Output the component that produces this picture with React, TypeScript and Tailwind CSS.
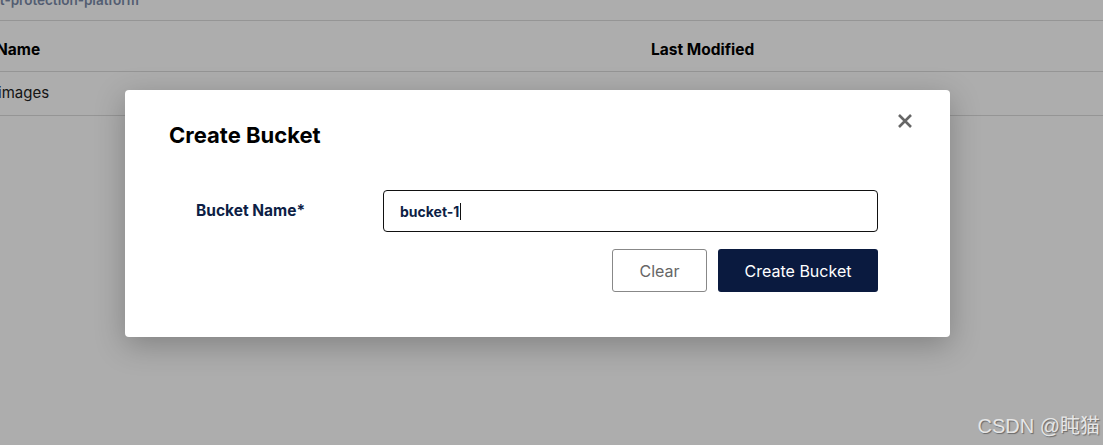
import React from "react";

export default function App() {
  return (
    <div className="relative w-[1103px] h-[445px] overflow-hidden bg-white font-['Inter',sans-serif]">
      {/* underlying page */}
      <div className="flex flex-col mt-[-9px]">
        <div className="h-[30px] flex items-center pb-[10px] border-b border-[#dcdcdc] ml-[-8px]">
          <span className="text-[13.5px] font-semibold text-[#7a8aa8]">ct-protection-platform</span>
        </div>
        <div className="h-[51px] flex items-center pt-[7px] border-b border-[#dcdcdc] text-[15.5px] font-bold text-black">
          <div className="w-[651px] ml-[-4px]">Name</div>
          <div className="ml-[4px]">Last Modified</div>
        </div>
        <div className="h-[44px] flex items-center border-b border-[#dcdcdc] text-[15px] text-[#222]">
          <div className="ml-[-2px]">images</div>
        </div>
      </div>

      {/* backdrop */}
      <div className="absolute inset-0 bg-black/[0.32]" />

      {/* modal */}
      <div className="absolute left-[125px] top-[90px] w-[825px] h-[247px] bg-white rounded-[4px] shadow-[0_8px_30px_rgba(0,0,0,0.25)] pl-[44px] pr-[72px] pt-[31px]">
        <button className="absolute right-[36px] top-[22px] w-[18px] h-[18px] flex items-center justify-center text-[#666]">
          <svg width="18" height="18" viewBox="0 0 18 18" fill="none">
            <path d="M3 3L15 15M15 3L3 15" stroke="#666" strokeWidth="2.6" strokeLinecap="butt" />
          </svg>
        </button>
        <h2 className="text-[22px] leading-[28px] font-bold text-black">Create Bucket</h2>
        <div className="flex items-center mt-[41px] h-[42px]">
          <label className="w-[214px] pl-[27px] text-[15.5px] font-bold text-[#0d1e45]">Bucket Name*</label>
          <div className="flex-1 h-[42px] border border-[#111] rounded-[4px] flex items-center pl-[16px]">
            <span className="text-[14px] font-bold text-[#0d1e45]">bucket-1</span>
            <span className="w-px h-[17px] bg-[#111] ml-[1px]" />
          </div>
        </div>
        <div className="flex justify-end gap-[11px] mt-[17px]">
          <button className="w-[95px] h-[43px] border border-[#888] rounded-[3px] text-[16px] text-[#666] bg-white">
            Clear
          </button>
          <button className="w-[160px] h-[43px] rounded-[3px] text-[16px] text-white bg-[#0a1a3f]">
            Create Bucket
          </button>
        </div>
      </div>

      {/* watermark */}
      <div className="absolute right-[3px] bottom-[6px] text-[20px] leading-[26px] text-[#e6e6e6] font-['Liberation_Sans','Noto_Sans_CJK_SC',sans-serif] [text-shadow:1px_1px_1px_rgba(0,0,0,0.4)]">
        CSDN @盹猫
      </div>
    </div>
  );
}
